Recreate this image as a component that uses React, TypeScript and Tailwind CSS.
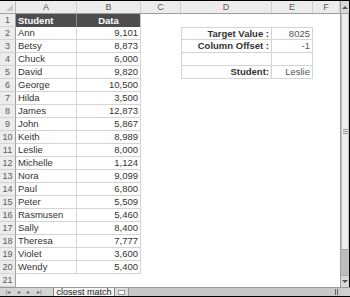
import React from "react";

const data: [string, string][] = [
  ["Ann", "9,101"],
  ["Betsy", "8,873"],
  ["Chuck", "6,000"],
  ["David", "9,820"],
  ["George", "10,500"],
  ["Hilda", "3,500"],
  ["James", "12,873"],
  ["John", "5,867"],
  ["Keith", "8,989"],
  ["Leslie", "8,000"],
  ["Michelle", "1,124"],
  ["Nora", "9,099"],
  ["Paul", "6,800"],
  ["Peter", "5,509"],
  ["Rasmusen", "5,460"],
  ["Sally", "8,400"],
  ["Theresa", "7,777"],
  ["Violet", "3,600"],
  ["Wendy", "5,400"],
];

const side: Record<number, [string, string]> = {
  2: ["Target Value :", "8025"],
  3: ["Column Offset :", "-1"],
  4: ["", ""],
  5: ["Student:", "Leslie"],
};

const cols = "grid grid-cols-[16px_61px_64px_40px_91px_41px_27px]";

export default function App() {
  const rows = Array.from({ length: 21 }, (_, i) => i + 1);
  return (
    <div
      className="w-[350px] h-[297px] bg-white flex flex-col overflow-hidden border-t border-b border-black text-[9.5px] text-[#333]"
      style={{ fontFamily: '"Liberation Sans", Arial, sans-serif' }}
    >
      <div className="flex flex-1 min-h-0">
        <div className="flex-1 flex flex-col">
          {/* column header */}
          <div className={`${cols} h-[13px] bg-[#ececec] border-b border-[#9e9e9e] text-[#5a5a5a] text-[9px]`}>
            <div className="border-r border-[#b8b8b8] relative">
              <div className="absolute right-[2px] bottom-[2px] w-0 h-0 border-l-[7px] border-l-transparent border-b-[7px] border-b-[#c8c8c8]" />
            </div>
            {["A", "B", "C", "D", "E", "F"].map((c) => (
              <div key={c} className="border-r border-[#cfcfcf] flex items-center justify-center leading-none">
                {c}
              </div>
            ))}
          </div>
          {rows.map((r) => {
            const inData = r <= 20;
            const d = r >= 2 ? data[r - 2] : null;
            const s = side[r];
            return (
              <div key={r} className={`${cols} h-[13px]`}>
                <div className="bg-[#ececec] border-r border-[#9e9e9e] border-b border-b-[#d4d4d4] text-[#5a5a5a] text-[9px] flex items-center justify-center leading-none">
                  {r}
                </div>
                {r === 1 ? (
                  <>
                    <div className="bg-[#4d4d4d] text-white font-bold border-r border-[#8a8a8a] flex items-center pl-[2px] leading-none">
                      Student
                    </div>
                    <div className="bg-[#4d4d4d] text-white font-bold border-r border-[#c8c8c8] flex items-center justify-center leading-none">
                      Data
                    </div>
                  </>
                ) : inData ? (
                  <>
                    <div className="border-r border-b border-[#d4d4d4] flex items-center pl-[2px] leading-none">
                      {d![0]}
                    </div>
                    <div className="border-r border-b border-[#d4d4d4] flex items-center justify-end pr-[2px] leading-none">
                      {d![1]}
                    </div>
                  </>
                ) : (
                  <>
                    <div />
                    <div />
                  </>
                )}
                <div />
                {s ? (
                  <>
                    <div className={`border-l border-r border-b border-[#d4d4d4] ${r === 2 ? "border-t" : ""} flex items-center justify-end pr-[2px] font-bold leading-none`}>
                      {s[0]}
                    </div>
                    <div className={`border-r border-b border-[#d4d4d4] ${r === 2 ? "border-t" : ""} flex items-center justify-end pr-[2px] leading-none text-[#555]`}>
                      {s[1]}
                    </div>
                  </>
                ) : (
                  <>
                    <div />
                    <div />
                  </>
                )}
                <div />
              </div>
            );
          })}
        </div>
        {/* vertical scrollbar */}
        <div className="w-[10px] flex flex-col bg-[#e6e6e6] border-l border-[#a0a0a0] border-r border-r-black">
          <div className="h-[13px] bg-[#d8d8d8] border-b border-[#a8a8a8] flex items-center justify-center">
            <div className="w-0 h-0 border-l-[3px] border-r-[3px] border-b-[3px] border-l-transparent border-r-transparent border-b-[#555]" />
          </div>
          <div className="h-[236px] bg-[#ededed] border-x border-[#c0c0c0] border-b border-b-[#a8a8a8] flex items-center justify-center">
            <div className="w-[5px] h-[5px] flex flex-col gap-[1px]">
              <div className="h-px bg-[#999]" />
              <div className="h-px bg-[#999]" />
              <div className="h-px bg-[#999]" />
            </div>
          </div>
          <div className="flex-1 bg-[#bdbdbd]" />
          <div className="h-[12px] bg-[#d8d8d8] border-t border-[#a8a8a8] flex items-center justify-center">
            <div className="w-0 h-0 border-l-[3px] border-r-[3px] border-t-[3px] border-l-transparent border-r-transparent border-t-[#555]" />
          </div>
        </div>
      </div>
      {/* sheet tab bar */}
      <div className="h-[9px] flex items-stretch bg-[#c8c8c8] border-t border-[#9a9a9a] text-[#444]">
        <div className="w-[47px] flex items-center justify-around px-[2px] text-[6px] leading-none text-[#666] bg-[#d4d4d4]">
          <span>|◂</span>
          <span>◂</span>
          <span>▸</span>
          <span>▸|</span>
        </div>
        <div className="w-[6px] bg-[#d4d4d4]" />
        <div className="w-[62px] bg-[#f4f4f4] border-x border-[#888] flex items-center justify-center text-[9px] leading-none text-[#222]">
          closest match
        </div>
        <div className="w-[14px] bg-[#dcdcdc] border-r border-[#999] flex items-center justify-center">
          <div className="w-[7px] h-[5px] border border-[#999] bg-white" />
        </div>
        <div className="flex-1" />
        <div className="w-[8px] flex items-center justify-center gap-[1px]">
          <div className="w-px h-[6px] bg-[#666]" />
          <div className="w-px h-[6px] bg-[#666]" />
        </div>
        <div className="w-[10px] bg-[#d0d0d0]" />
      </div>
    </div>
  );
}
